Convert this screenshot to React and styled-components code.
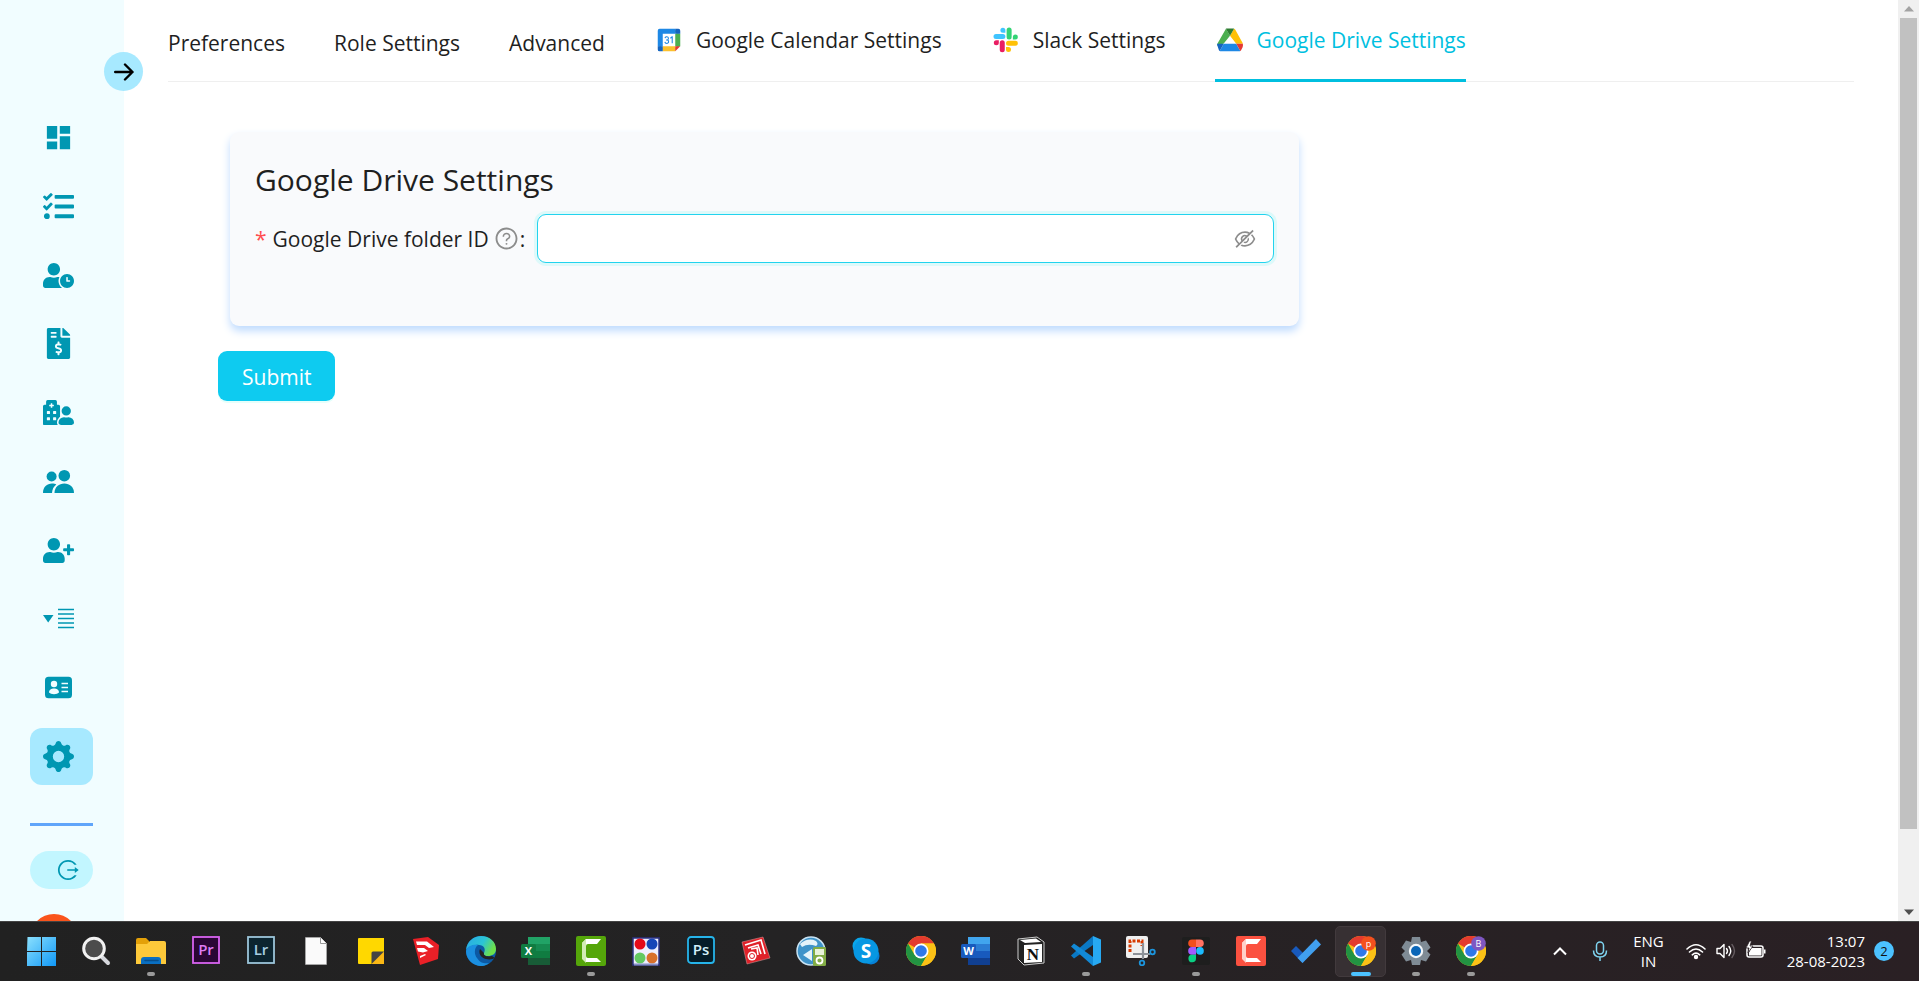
import React from 'react';
import styled, { createGlobalStyle, css } from 'styled-components';
import { MdDashboard } from 'react-icons/md';
import { FaTasks, FaUserClock, FaFileInvoiceDollar, FaHospitalUser, FaUserPlus } from 'react-icons/fa';
import { BsGearFill } from 'react-icons/bs';
import { AiOutlineLogout, AiOutlineEyeInvisible, AiOutlineQuestionCircle } from 'react-icons/ai';

const colors = {
  teal: '#0097b2',
  cyan: '#00bfdf',
  cyanButton: '#0ecbf0',
  sidebar: '#f1fdff',
  selected: '#a7e9ff',
  text: '#1f1f1f',
};

const GlobalStyle = createGlobalStyle`
  * { box-sizing: border-box; }
  body {
    margin: 0;
    background: #fff;
    color: ${colors.text};
    font-family: 'Segoe UI', 'Open Sans', 'Noto Sans', sans-serif;
    font-size: 21px;
  }
  button, input { font: inherit; color: inherit; }
  svg { display: block; flex: none; }
`;

const Desktop = styled.div`
  display: flex;
  flex-direction: column;
  height: 100vh;
  overflow: hidden;
`;

const Viewport = styled.div`
  display: flex;
  flex: 1;
  min-height: 0;
  overflow: hidden;
`;

/* ---------- Sidebar ---------- */

const Sidebar = styled.aside`
  position: relative;
  flex: none;
  width: 124px;
  padding: 109px 31px 0 30px;
  background: ${colors.sidebar};
  color: ${colors.teal};
`;

const ExpandButton = styled.button`
  position: absolute;
  top: 52px;
  right: -19px;
  display: grid;
  place-items: center;
  width: 39px;
  height: 39px;
  padding: 0;
  border: 0;
  border-radius: 50%;
  background: ${colors.selected};
  color: #000;
`;

const NavList = styled.ul`
  display: flex;
  flex-direction: column;
  justify-content: space-between;
  height: 676px;
  margin: 0;
  padding: 0;
  list-style: none;
`;

const NavLink = styled.a`
  display: flex;
  align-items: center;
  height: 57px;
  padding-left: 13px;
  border-radius: 12px;
  color: inherit;
  background: ${(p) => (p.$active ? colors.selected : 'transparent')};
`;

const IconBox = styled.span`
  display: grid;
  place-items: center;
  width: 31px;
`;

const SidebarDivider = styled.hr`
  height: 3px;
  margin: 38px 0 25px;
  border: 0;
  background: #60a5fa;
`;

const LogoutButton = styled.button`
  display: flex;
  align-items: center;
  justify-content: flex-end;
  width: 100%;
  height: 38px;
  padding: 0 13px;
  border: 0;
  border-radius: 20px;
  background: #c2f6ff;
`;

const Avatar = styled.div`
  width: 48px;
  height: 48px;
  margin-top: 25px;
  border-radius: 50%;
  background: #fa541c;
`;

/* ---------- Main ---------- */

const Main = styled.main`
  flex: 1;
  min-width: 0;
  padding: 0 44px;
`;

const TabBar = styled.div`
  display: flex;
  gap: 49px;
  height: 82px;
  border-bottom: 1px solid #efefef;
`;

const Tab = styled.button`
  display: flex;
  align-items: center;
  gap: 12px;
  height: 82px;
  padding: ${(p) => (p.$plain ? '4px 0 0' : '0 0 2px')};
  border: 0;
  background: none;
  line-height: 32px;
  white-space: nowrap;
  ${(p) =>
    p.$active &&
    css`
      color: ${colors.cyan};
      box-shadow: inset 0 -3px ${colors.cyan};
    `}
`;

const Form = styled.form`
  width: 65%;
  margin: 50px 0 0 50px;
`;

const Card = styled.section`
  min-height: 194px;
  margin: 0 15px 25px 12px;
  padding: 25px;
  border-radius: 9px;
  background: #f9fafc;
  box-shadow: 0 5px 8px #bfdbfe;
`;

const CardTitle = styled.h1`
  margin: 0;
  font-size: 30px;
  font-weight: 400;
  line-height: 46px;
`;

const FieldRow = styled.div`
  display: flex;
  align-items: center;
  gap: 12px;
  margin-top: 11px;
`;

const FieldLabel = styled.label`
  display: flex;
  align-items: center;
  line-height: 32px;
  white-space: nowrap;
`;

const Required = styled.span`
  margin-right: 6px;
  color: #ff4d4f;
`;

const Hint = styled.span`
  margin: 0 1px 0 5px;
  color: #8c8c8c;
`;

const SecretField = styled.div`
  display: flex;
  flex: 1;
  align-items: center;
  height: 49px;
  padding: 0 16px;
  border: 1px solid #22d3ee;
  border-radius: 9px;
  background: #fff;
  box-shadow: 0 0 0 3px #def9fa;
`;

const SecretInput = styled.input`
  flex: 1;
  min-width: 0;
  border: 0;
  outline: 0;
  background: none;
`;

const RevealButton = styled.button`
  padding: 0;
  border: 0;
  background: none;
  color: #8c8c8c;
`;

const SubmitButton = styled.button`
  height: 50px;
  padding: 2px 24px 0;
  border: 0;
  border-radius: 9px;
  background: ${colors.cyanButton};
  color: #fff;
  box-shadow: 0 2px 0 #e6fffb;
`;

/* ---------- Scrollbar ---------- */

const ScrollTrack = styled.div`
  display: flex;
  flex: none;
  flex-direction: column;
  align-items: center;
  width: 21px;
  background: #f0f0f0;
`;

const ScrollArrow = styled.span`
  display: grid;
  place-items: center;
  width: 100%;
  height: 18px;
  color: ${(p) => p.$color};
`;

const ScrollThumb = styled.div`
  flex: 11;
  width: 17px;
  background: #c1c1c1;
`;

const ScrollRest = styled.div`
  flex: 1;
`;

/* ---------- Taskbar ---------- */

const Taskbar = styled.footer`
  display: flex;
  flex: none;
  justify-content: space-between;
  height: 60px;
  padding: 0 25px 0 13px;
  border-top: 1px solid #444;
  background: linear-gradient(90deg, #212121, #242324 40%, #2a2024);
  color: #fff;
  font-size: 15px;
  line-height: 20px;
`;

const Apps = styled.div`
  display: flex;
`;

const AppButton = styled.button`
  position: relative;
  display: grid;
  place-items: center;
  width: 51px;
  height: 51px;
  margin: 4px 2px;
  padding: 0 0 1px;
  border: 1px solid ${(p) => (p.$active ? '#423a3d' : 'transparent')};
  border-radius: 5px;
  background: ${(p) => (p.$active ? '#373033' : 'none')};
`;

const Running = styled.span`
  position: absolute;
  bottom: 0;
  width: ${(p) => (p.$active ? 20 : 8)}px;
  height: 4px;
  border-radius: 2px;
  background: ${(p) => (p.$active ? '#4cc2ff' : '#9a9a9a')};
`;

const Tray = styled.div`
  display: flex;
  align-items: center;
  padding-bottom: 2px;
`;

const TrayGroup = styled.div`
  display: flex;
  align-items: center;
  gap: 10px;
  margin-right: 21px;
`;

const TrayIcon = styled.span`
  margin-right: 23px;
`;

const Language = styled.div`
  margin-right: 22px;
  text-align: center;
`;

const Clock = styled.div`
  margin-right: 9px;
  text-align: right;
`;

const Badge = styled.span`
  display: grid;
  place-items: center;
  width: 20px;
  height: 20px;
  border-radius: 50%;
  background: #4cc2ff;
  color: #111;
  font-size: 13px;
`;

/* ---------- Drawings ---------- */

const Svg = ({ size = 30, box = 30, children, ...rest }) => (
  <svg width={size} height={size} viewBox={`0 0 ${box} ${box}`} fill="none" aria-hidden="true" {...rest}>
    {children}
  </svg>
);

const Glyph = ({ x = 15, y = 20, size = 14, fill, weight = 600, children }) => (
  <text x={x} y={y} fontSize={size} fill={fill} fontWeight={weight} textAnchor="middle" fontFamily="'Open Sans', sans-serif">
    {children}
  </text>
);

const ArrowRight = () => (
  <Svg size={20} box={20} stroke="currentColor" strokeWidth="2.4" strokeLinecap="round" strokeLinejoin="round">
    <path d="M1.2 10H18.5M11 2.500l7.500 7.500-7.500 7.500" />
  </Svg>
);

const PeopleIcon = () => (
  <Svg size={31} box={31} fill="currentColor">
    <circle cx="8.600" cy="10.500" r="5" />
    <circle cx="21.300" cy="9.700" r="5.800" />
    <path d="M0 27c0-6 4-9.500 9-9.500 1.800 0 3.200.4 4.300 1-2.600 2-4.100 4.800-4.300 8.500z" />
    <path d="M11.500 27c0-6 4.500-9.500 9.800-9.500S31 21 31 27z" />
  </Svg>
);

const IdCardIcon = () => (
  <Svg size={31} box={31} fill="currentColor">
    <rect x="2" y="4.700" width="27" height="21.600" rx="3.500" />
    <g fill={colors.sidebar}>
      <circle cx="11" cy="12" r="3.200" />
      <path d="M6 20.500c0-2.800 2.300-4 5-4s5 1.200 5 4q-1.500 1.800-5 1.800t-5-1.800z" />
    </g>
    <path d="M18.500 11.500h6.500M18.500 15.500h6.500M18.500 19.500h6.500" stroke={colors.sidebar} strokeWidth="1.500" />
  </Svg>
);

const ListIcon = () => (
  <Svg size={31} box={31} fill="currentColor">
    <path d="M0 12H10.500L5.200 19.500Z" />
    <path d="M15 6.500H31M15 11H31M15 15.500H31M15 20H31M15 24.500H31" stroke="currentColor" strokeWidth="1.500" />
  </Svg>
);

const CalendarLogo = () => (
  <Svg box={48}>
    <path d="M13 13h22v22H13z" fill="#fff" />
    <path d="M25.7 20.3l1 1.5 1.6-1.2v8.4h1.7V18.1h-1.4zM22.9 23.6c.6-.6 1-1.3 1-2.2 0-1.9-1.6-3.4-3.6-3.4-1.7 0-3.1 1.1-3.5 2.7l1.7.4c.2-.8.9-1.4 1.8-1.4 1 0 1.9.8 1.9 1.7s-.9 1.7-1.9 1.7h-1v1.7h1c1.2 0 2.2.9 2.2 1.9 0 1.1-1 1.9-2.1 1.9-1 0-1.9-.7-2.1-1.7l-1.7.3c.3 1.8 1.9 3.1 3.8 3.1 2.1 0 3.8-1.6 3.8-3.6 0-1.3-.6-2.4-1.3-3.1z" fill="#1e88e5" />
    <path d="M34 42H14l-1-4 1-4h20l1 4z" fill="#fbc02d" />
    <path d="M38 35l4-1V14l-4-1-4 1v20z" fill="#4caf50" />
    <path d="M34 14l1-4-1-4H9a3 3 0 0 0-3 3v25l4 1 4-1V14z" fill="#1e88e5" />
    <path d="M34 34v8l8-8z" fill="#e53935" />
    <path d="M39 6h-5v8h8V9a3 3 0 0 0-3-3zM9 42h5v-8H6v5a3 3 0 0 0 3 3z" fill="#1565c0" />
  </Svg>
);

const SlackLogo = () => (
  <Svg box={48}>
    <path d="M33 8a4 4 0 0 0-8 0v11a4 4 0 0 0 8 0zM43 19a4 4 0 0 0-8 0v4h4a4 4 0 0 0 4-4z" fill="#33d375" />
    <path d="M8 14.5a4 4 0 0 0 0 8h11a4 4 0 0 0 0-8zM19 4.500a4 4 0 0 0 0 8h4v-4a4 4 0 0 0-4-4z" fill="#40c4ff" />
    <path d="M14 39.500a4 4 0 0 0 8 0v-11a4 4 0 0 0-8 0zM4.500 28.500a4 4 0 0 0 8 0v-4h-4a4 4 0 0 0-4 4z" fill="#e91e63" />
    <path d="M39 33a4 4 0 0 0 0-8H28a4 4 0 0 0 0 8zM28 43a4 4 0 0 0 0-8h-4v4a4 4 0 0 0 4 4z" fill="#ffc107" />
  </Svg>
);

const DriveLogo = () => (
  <Svg box={48}>
    <path d="M17.500 6L4 29.500c-.7 1.100-.6 2.400 0 3.500l10-3.500L24 17z" fill="#4caf50" />
    <path d="M30.500 6L24 17l10 13h10.500c0-.6-.2-1.300-.5-1.800L32.500 7.500A4 4 0 0 0 30.500 6z" fill="#ffc107" />
    <path d="M30.500 6c-.5-.4-1-.5-1.600-.5H19c-.6 0-1.100.2-1.600.5L24 17z" fill="#2e7d32" />
    <path d="M14 30l-6.500 11.500c.5.300 1 .5 1.600.5h29.800c.6 0 1.100-.2 1.600-.5L34 30z" fill="#1e88e5" />
    <path d="M34 30l6.500 11.500c.5-.3.900-.7 1.200-1.200l2.300-4.500c.8-1.500 1-3.500.5-5.800z" fill="#e53935" />
    <path d="M14 30H3.500c-.2 1.500 0 2.500.5 3.600l2.300 6.700c.3.500.7.900 1.200 1.200z" fill="#1565c0" />
  </Svg>
);

const WindowsIcon = () => (
  <Svg>
    <defs>
      <linearGradient id="win" x1="0" y1="0" x2="1" y2="1">
        <stop stopColor="#8be0fd" />
        <stop offset="1" stopColor="#1098f7" />
      </linearGradient>
    </defs>
    <path d="M1.500 1H15v14H1zM16 1h14v14H16zM1 16h14v14H1zM16 16h14v14H16z" fill="url(#win)" />
  </Svg>
);

const SearchIcon = () => (
  <Svg>
    <path d="M19.500 19.500L27 27" stroke="#d5d7dc" strokeWidth="4" strokeLinecap="round" />
    <circle cx="13" cy="12.500" r="10.300" fill="#4c4c4c" stroke="#f2f2f2" strokeWidth="3" />
  </Svg>
);

const FolderIcon = () => (
  <Svg>
    <path d="M0 4q0-2 2-2h8l3 3v6H0z" fill="#e3a008" />
    <path d="M0 8h11l3-3h14q2 0 2 2v21H0z" fill="#fdc93a" />
    <path d="M5 28v-4q0-3 3-3h14q3 0 3 3v4z" fill="#0a6fc2" />
    <path d="M9 24.500h13" stroke="#074e8c" strokeWidth="1.500" strokeLinecap="round" />
  </Svg>
);

const LetterTile = ({ letters, fg, edge, bg, radius = 0 }) => (
  <Svg>
    <rect x="2" y="1" width="26" height="26" rx={radius} fill={bg} stroke={edge} strokeWidth="1.800" />
    <Glyph fill={fg} y={19} size={15}>{letters}</Glyph>
  </Svg>
);

const DocumentIcon = () => (
  <Svg>
    <path d="M4.500 1.500h15l6 6V28.500h-21z" fill="#fafafa" stroke="#b5b5b5" strokeWidth=".6" />
    <path d="M19.500 1.500v6h6" stroke="#999" fill="#fff" />
  </Svg>
);

const StickyIcon = () => (
  <Svg>
    <path d="M2 3q0-1 1-1h25v26H3q-1 0-1-1z" fill="#ffd800" />
    <path d="M15 28h13V15z" fill="#fbb815" />
    <path d="M15.500 28V17q0-1.500 1.500-1.500h11z" fill="#444" />
  </Svg>
);

const SketchUpIcon = () => (
  <Svg>
    <path d="M2 3l15-2 11 8-1 14-18 6z" fill="#ea2027" />
    <path d="M5 5.500h11l7 5.500-5 1-4-3H6zM6 12h7l4 3-5 1.500-5-1zM9 20l5-2 1 1-6 3z" fill="#fff" />
  </Svg>
);

const EdgeIcon = () => (
  <Svg>
    <defs>
      <linearGradient id="edge" x1="0" y1="0" x2="1" y2=".4">
        <stop stopColor="#2aa9e6" />
        <stop offset=".6" stopColor="#2bc4d6" />
        <stop offset="1" stopColor="#6de04c" />
      </linearGradient>
    </defs>
    <circle cx="15" cy="15" r="15" fill="#0c59a4" />
    <path d="M0 14C1 5 8 0 15 0c9 0 15 6 15 13 0 5-4 7-8 7-4 0-5-2-4-3 2-4 0-8-5-8C7 8 1 12 0 14z" fill="url(#edge)" />
    <path d="M0 15C1 10 7 8 12 9c-4 3-4 9-1 13 3 5 8 6 12 5-3 3-8 4-13 2C4 27 0 21 0 15z" fill="#1b8fe0" />
    <path d="M14 13c-2 4 1 9 6 10 4 1 7 0 9-1l-3-2c-4 1-9 0-8-3z" fill="#242324" />
  </Svg>
);

const OfficeIcon = ({ letter, tones, tile }) => (
  <Svg>
    {tones.map((tone, i) => (
      <rect key={tone} x="7" y={1 + i * 7} width="22" height="7" fill={tone} />
    ))}
    <rect x="0" y="8" width="15" height="14" rx="1.500" fill={tile} />
    <Glyph x={7.5} y={19} size={11} weight={700} fill="#fff">{letter}</Glyph>
  </Svg>
);

const CamtasiaIcon = ({ bg, shade }) => (
  <Svg>
    <rect width="30" height="30" rx="2" fill={bg} />
    <path d="M10 3h15l-4 5H12q-2 0-2 2v10q0 2 2 2h9l4 4H10l-4-4V7z" fill="#fff" />
    <path d="M6 7l4-4v24l-4-4z" fill={shade} />
  </Svg>
);

const BallsIcon = () => (
  <Svg>
    <rect x="2" y="2" width="26" height="27" fill="#eef" stroke="#2d3282" strokeWidth="1.500" />
    <circle cx="9" cy="8" r="5.500" fill="#e5091a" />
    <circle cx="21" cy="8" r="5.500" fill="#1746b8" />
    <circle cx="9" cy="22" r="5.500" fill="#63c862" />
    <circle cx="21" cy="22" r="5.500" fill="#d8702c" />
    <path d="M3 28.500h24" stroke="#8790c4" strokeWidth="2" />
  </Svg>
);

const LayoutIcon = () => (
  <Svg>
    <path d="M1 6l21-5 7 21-23 6z" fill="#e02129" stroke="#d8a0a0" strokeWidth=".5" />
    <path d="M4 9l16-5 4 14M7 12l10-3 3 9M10 13l6-1 1 7" stroke="#fff" strokeWidth="1.600" />
    <circle cx="11" cy="20" r="4.500" fill="#fff" />
    <circle cx="11" cy="20" r="2.500" stroke="#e02129" />
  </Svg>
);

const GlobeIcon = () => (
  <Svg>
    <circle cx="15" cy="15" r="14" fill="#3f93c9" stroke="#c9e3f3" strokeWidth="1.500" />
    <path d="M4 8q8-7 16-3 3 3 0 5-8-3-14 1zM7 19l9-6v12z" fill="#e5f3fa" />
    <rect x="17" y="11" width="13" height="19" rx="1.500" fill="#82ac45" />
    <path d="M19 13h9v6h-9z" fill="#e9f3da" />
    <circle cx="23.500" cy="24.500" r="3" stroke="#fff" strokeWidth="1.800" />
  </Svg>
);

const SkypeIcon = () => (
  <Svg>
    <circle cx="10" cy="10" r="8.500" fill="#0aa5ea" />
    <circle cx="20" cy="20" r="8.500" fill="#0682d8" />
    <circle cx="15" cy="15" r="12.500" fill="#0797e2" />
    <Glyph y={22} size={19} weight={700} fill="#fff">S</Glyph>
  </Svg>
);

const ChromeIcon = ({ profile, profileColor }) => (
  <Svg>
    <circle cx="15" cy="15" r="15" fill="#fbc116" />
    <path d="M15 15L2 7.500A15 15 0 0 1 28 7.500H15z" fill="#e33b2e" />
    <path d="M2 7.500A15 15 0 0 0 15 30l6.500-11.300L15 15 8.500 18.700z" fill="#229342" />
    <path d="M28 7.500H15v4l6.500 7.200L15 30A15 15 0 0 0 28 7.500z" fill="#fbc116" />
    <circle cx="15" cy="15" r="7.500" fill="#fff" />
    <circle cx="15" cy="15" r="5.800" fill="#2f78e8" />
    {profile && (
      <>
        <circle cx="22.500" cy="7.500" r="7.300" fill={profileColor} />
        <Glyph x={22.5} y={10.5} size={9} weight={400} fill="#fff">{profile}</Glyph>
      </>
    )}
  </Svg>
);

const NotionIcon = () => (
  <Svg>
    <path d="M2 3l19-2 7 5v21l-20 2-6-6z" fill="#222" stroke="#ccc" />
    <path d="M4 4l16-1.500 5 3.500-16 1z" fill="#fff" />
    <path d="M8 9l18-1v18L8 27z" fill="#fff" />
    <text x="17" y="23.500" fontSize="17" fontWeight="700" textAnchor="middle" fill="#111" fontFamily="'Liberation Serif', serif">N</text>
  </Svg>
);

const CodeIcon = () => (
  <Svg>
    <path d="M22 0v9L3 22.500 0 19.500z" fill="#0a78c4" />
    <path d="M22 30v-9L3 7.500 0 10.500z" fill="#1289d6" />
    <path d="M22 0l8 3.500v23L22 30z" fill="#27a9f2" />
  </Svg>
);

const SnipIcon = () => (
  <Svg>
    <rect width="22" height="22" rx="2" fill="#f0f0f0" />
    <path d="M4 16V5h12v5" stroke="#d83b01" strokeWidth="3" strokeDasharray="3 1.500" />
    <path d="M17 7v16M7 18h17" stroke="#8d9299" strokeWidth="2.200" />
    <circle cx="16" cy="27" r="2.300" stroke="#1c95dd" strokeWidth="1.800" />
    <circle cx="26.500" cy="16" r="2.300" stroke="#1c95dd" strokeWidth="1.800" />
  </Svg>
);

const FigmaIcon = () => (
  <Svg>
    <rect x="1" y="1" width="28" height="28" rx="2" fill="#1e1e1e" />
    <path d="M15 3.500h-4a3.800 3.800 0 0 0 0 7.600h4z" fill="#f24e1e" />
    <path d="M15 3.500h4a3.800 3.800 0 0 1 0 7.600h-4z" fill="#ff7262" />
    <path d="M15 11.100h-4a3.800 3.800 0 0 0 0 7.600h4z" fill="#a259ff" />
    <circle cx="19" cy="14.900" r="3.800" fill="#1abcfe" />
    <path d="M15 18.700h-4a3.800 3.800 0 1 0 4 3.800z" fill="#0acf83" />
  </Svg>
);

const ToDoIcon = () => (
  <Svg>
    <path d="M0 15l5-5 11.500 11.500-5 5.500z" fill="#185abd" />
    <path d="M6.500 22L25 3l5 5.500L11.500 27z" fill="#419fee" />
  </Svg>
);

const SettingsIcon = () => (
  <Svg>
    <path d="M11 1h8l1 5 5-1.500 4.500 7L26 15l3.500 3.500-4.500 7L20 24l-1 5h-8l-1-5-5 1.500-4.500-7L4 15 .5 11.500l4.500-7L10 6z" fill="#7f8b95" />
    <circle cx="15" cy="15" r="7.200" fill="#f4f7fa" />
    <circle cx="15" cy="15" r="5" fill="#0a66b8" />
  </Svg>
);

const ChevronUp = () => (
  <Svg size={14} box={14} stroke="#fff" strokeWidth="2">
    <path d="M1 10.500l6-6 6 6" />
  </Svg>
);

const MicIcon = () => (
  <Svg size={20} box={20} stroke="#7fd4f0" strokeWidth="1.500">
    <rect x="6.500" y="1" width="7" height="12" rx="3.500" />
    <path d="M3.500 9.500q0 6.500 6.500 6.500t6.500-6.500M10 16v4" />
  </Svg>
);

const WifiIcon = () => (
  <Svg size={20} box={20} stroke="#fff" strokeWidth="1.600" strokeLinecap="round">
    <path d="M1 8q9-8.500 18 0M3.500 11q6.500-6 13 0M6.300 13.800q3.700-3.500 7.400 0" />
    <circle cx="10" cy="16" r="1.400" fill="#fff" />
  </Svg>
);

const SpeakerIcon = () => (
  <Svg size={20} box={20} stroke="#fff" strokeWidth="1.400" strokeLinecap="round" strokeLinejoin="round">
    <path d="M1 7.500h3l4-4v13l-4-4H1zM10.500 7.500q2 2.500 0 5M13 5.500q3.500 4.500 0 9" />
    <path d="M16 3.500q5 6.500 0 13" stroke="#655c60" />
  </Svg>
);

const BatteryIcon = () => (
  <Svg size={20} box={20}>
    <rect x="1" y="5" width="16" height="11" rx="2" stroke="#fff" strokeWidth="1.500" />
    <path d="M5 7h10.500v7.500H3v-3zM18 8.500h1.500v4H18z" fill="#fff" />
    <path d="M3.500 0L0 7h3l-1 5 5-7H4l1.500-5z" fill="#fff" stroke="#2a2024" strokeWidth=".8" />
  </Svg>
);

/* ---------- Data ---------- */

const navItems = [
  { label: 'Dashboard', icon: <MdDashboard size={31} /> },
  { label: 'Tasks', icon: <FaTasks size={31} /> },
  { label: 'Attendance', icon: <FaUserClock size={31} /> },
  { label: 'Invoices', icon: <FaFileInvoiceDollar size={31} /> },
  { label: 'Clients', icon: <FaHospitalUser size={31} /> },
  { label: 'Team', icon: <PeopleIcon /> },
  { label: 'Add user', icon: <FaUserPlus size={31} /> },
  { label: 'Lists', icon: <ListIcon /> },
  { label: 'Profile', icon: <IdCardIcon /> },
  { label: 'Settings', icon: <BsGearFill size={31} />, active: true },
];

const tabs = [
  { label: 'Preferences' },
  { label: 'Role Settings' },
  { label: 'Advanced' },
  { label: 'Google Calendar Settings', icon: <CalendarLogo /> },
  { label: 'Slack Settings', icon: <SlackLogo /> },
  { label: 'Google Drive Settings', icon: <DriveLogo />, active: true },
];

const apps = [
  { name: 'Start', icon: <WindowsIcon /> },
  { name: 'Search', icon: <SearchIcon /> },
  { name: 'File Explorer', icon: <FolderIcon />, running: true },
  { name: 'Premiere Pro', icon: <LetterTile letters="Pr" fg="#dd7bf2" edge="#d863f0" bg="#2a0634" /> },
  { name: 'Lightroom', icon: <LetterTile letters="Lr" fg="#a6cde2" edge="#9cc5da" bg="#0c2530" /> },
  { name: 'Document', icon: <DocumentIcon /> },
  { name: 'Sticky Notes', icon: <StickyIcon /> },
  { name: 'SketchUp', icon: <SketchUpIcon /> },
  { name: 'Edge', icon: <EdgeIcon /> },
  { name: 'Excel', icon: <OfficeIcon letter="X" tile="#107c41" tones={['#21a366', '#168a50', '#107c41', '#185c37']} /> },
  { name: 'Camtasia', icon: <CamtasiaIcon bg="#55a60a" shade="#d3ebb5" />, running: true },
  { name: 'Color Balls', icon: <BallsIcon /> },
  { name: 'Photoshop', icon: <LetterTile letters="Ps" fg="#d3f0fa" edge="#26b4ea" bg="#051d28" radius={3} /> },
  { name: 'Layout', icon: <LayoutIcon /> },
  { name: 'Device Sync', icon: <GlobeIcon /> },
  { name: 'Skype', icon: <SkypeIcon /> },
  { name: 'Chrome', icon: <ChromeIcon /> },
  { name: 'Word', icon: <OfficeIcon letter="W" tile="#185abd" tones={['#41a5ee', '#2b7cd3', '#185abd', '#103f91']} /> },
  { name: 'Notion', icon: <NotionIcon /> },
  { name: 'Visual Studio Code', icon: <CodeIcon />, running: true },
  { name: 'Snipping Tool', icon: <SnipIcon /> },
  { name: 'Figma', icon: <FigmaIcon />, running: true },
  { name: 'Camtasia Recorder', icon: <CamtasiaIcon bg="#fb5140" shade="#ffd0c8" /> },
  { name: 'To Do', icon: <ToDoIcon /> },
  { name: 'Chrome, profile P', icon: <ChromeIcon profile="p" profileColor="#f4511e" />, running: true, active: true },
  { name: 'Settings', icon: <SettingsIcon />, running: true },
  { name: 'Chrome, profile B', icon: <ChromeIcon profile="B" profileColor="#7e57c2" />, running: true },
];

export default function App() {
  return (
    <Desktop>
      <GlobalStyle />
      <Viewport>
        <Sidebar>
          <ExpandButton type="button" aria-label="Expand menu">
            <ArrowRight />
          </ExpandButton>
          <nav>
            <NavList>
              {navItems.map(({ label, icon, active }) => (
                <li key={label}>
                  <NavLink href="#" aria-label={label} $active={active}>
                    <IconBox>{icon}</IconBox>
                  </NavLink>
                </li>
              ))}
            </NavList>
          </nav>
          <SidebarDivider />
          <LogoutButton type="button" aria-label="Log out">
            <AiOutlineLogout size={24} />
          </LogoutButton>
          <Avatar />
        </Sidebar>

        <Main>
          <TabBar role="tablist">
            {tabs.map(({ label, icon, active }) => (
              <Tab key={label} type="button" role="tab" aria-selected={!!active} $active={active} $plain={!icon}>
                {icon}
                {label}
              </Tab>
            ))}
          </TabBar>
          <Form>
            <Card>
              <CardTitle>Google Drive Settings</CardTitle>
              <FieldRow>
                <FieldLabel htmlFor="folder-id">
                  <Required>*</Required>
                  Google Drive folder ID
                  <Hint>
                    <AiOutlineQuestionCircle size={25} />
                  </Hint>
                  :
                </FieldLabel>
                <SecretField>
                  <SecretInput id="folder-id" type="password" />
                  <RevealButton type="button" aria-label="Show folder ID">
                    <AiOutlineEyeInvisible size={24} />
                  </RevealButton>
                </SecretField>
              </FieldRow>
            </Card>
            <SubmitButton type="button">Submit</SubmitButton>
          </Form>
        </Main>

        <ScrollTrack>
          <ScrollArrow $color="#a3a3a3">
            <Svg size={10} box={10} fill="currentColor"><path d="M0 7.500L5 2l5 5.500z" /></Svg>
          </ScrollArrow>
          <ScrollThumb />
          <ScrollRest />
          <ScrollArrow $color="#505050">
            <Svg size={10} box={10} fill="currentColor"><path d="M0 2.500L5 8l5-5.500z" /></Svg>
          </ScrollArrow>
        </ScrollTrack>
      </Viewport>

      <Taskbar>
        <Apps>
          {apps.map(({ name, icon, running, active }) => (
            <AppButton key={name} type="button" aria-label={name} $active={active}>
              {icon}
              {running && <Running $active={active} />}
            </AppButton>
          ))}
        </Apps>
        <Tray>
          <TrayIcon><ChevronUp /></TrayIcon>
          <TrayIcon><MicIcon /></TrayIcon>
          <Language>ENG<br />IN</Language>
          <TrayGroup>
            <WifiIcon />
            <SpeakerIcon />
            <BatteryIcon />
          </TrayGroup>
          <Clock>13:07<br />28-08-2023</Clock>
          <Badge>2</Badge>
        </Tray>
      </Taskbar>
    </Desktop>
  );
}
